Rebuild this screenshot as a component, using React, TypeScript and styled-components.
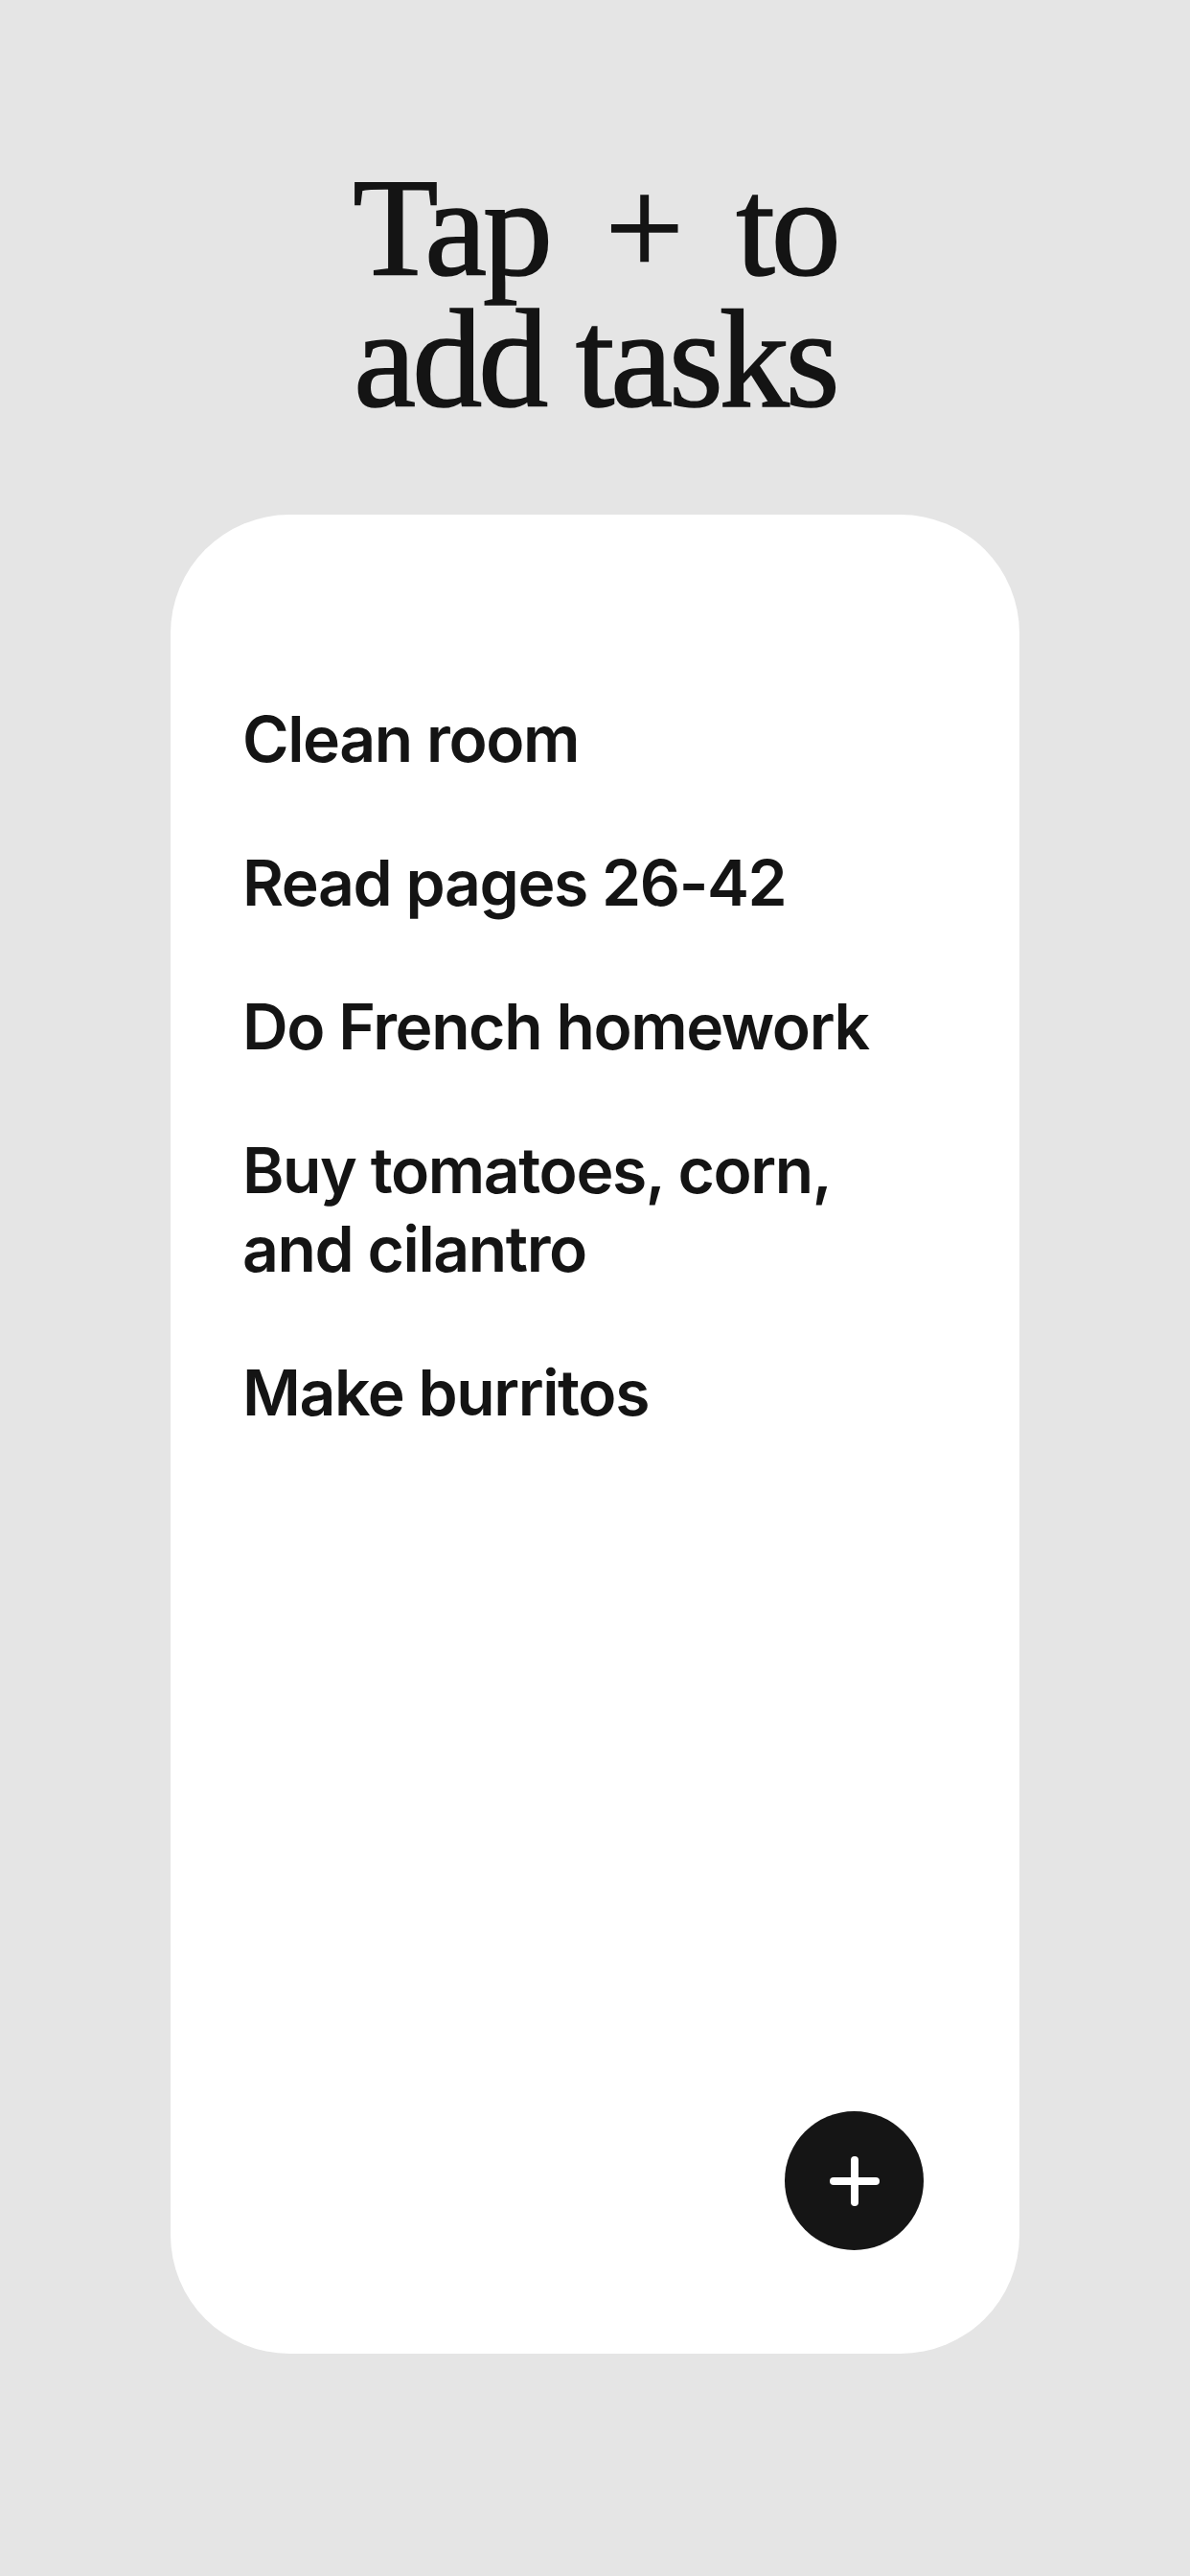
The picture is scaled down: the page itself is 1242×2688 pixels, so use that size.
import React from 'react';
import styled, { createGlobalStyle } from 'styled-components';

const tasks = [
  'Clean room',
  'Read pages 26-42',
  'Do French homework',
  'Buy tomatoes, corn, and cilantro',
  'Make burritos',
];

function App() {
  return (
    <>
      <GlobalStyle />
      <Screen>
        <Title>
          <TitleLine $spread>Tap + to</TitleLine>
          <TitleLine>add tasks</TitleLine>
        </Title>
        <Card>
          <TaskList>
            {tasks.map((task) => (
              <TaskItem key={task}>{task}</TaskItem>
            ))}
          </TaskList>
          <AddButton aria-label="Add task">
            <svg width="52" height="52" viewBox="0 0 52 52">
              <line x1="26" y1="4" x2="26" y2="48" stroke="#fff" strokeWidth="8" strokeLinecap="round" />
              <line x1="4" y1="26" x2="48" y2="26" stroke="#fff" strokeWidth="8" strokeLinecap="round" />
            </svg>
          </AddButton>
        </Card>
      </Screen>
    </>
  );
}

export default App;

const GlobalStyle = createGlobalStyle`
  html, body {
    margin: 0;
    padding: 0;
    background: #e5e5e5;
  }
`;

const Screen = styled.div`
  width: 1242px;
  height: 2688px;
  background: #e5e5e5;
  display: flex;
  flex-direction: column;
  align-items: center;
  padding-top: 170px;
  box-sizing: border-box;
`;

const Title = styled.h1`
  margin: 0;
  font-family: 'Liberation Serif', 'Times New Roman', serif;
  font-weight: 400;
  font-size: 146px;
  line-height: 137px;
  letter-spacing: -4px;
  color: #141414;
  -webkit-text-stroke: 1.6px #141414;
  text-align: center;
`;

const TitleLine = styled.span<{ $spread?: boolean }>`
  display: block;
  word-spacing: ${({ $spread }) => ($spread ? '26px' : '0')};
`;

const Card = styled.div`
  margin-top: 93px;
  width: 886px;
  height: 1919px;
  background: #ffffff;
  border-radius: 124px;
  box-sizing: border-box;
  padding: 193px 75px 108px;
  display: flex;
  flex-direction: column;
`;

const TaskList = styled.ul`
  list-style: none;
  margin: 0;
  padding: 0;
  max-width: 690px;
  display: flex;
  flex-direction: column;
  gap: 68px;
`;

const TaskItem = styled.li`
  font-family: Inter, 'Noto Sans', sans-serif;
  font-weight: 600;
  font-size: 66px;
  line-height: 82px;
  letter-spacing: -1.4px;
  color: #141414;
`;

const AddButton = styled.button`
  margin-top: auto;
  margin-right: 25px;
  align-self: flex-end;
  width: 145px;
  height: 145px;
  border-radius: 50%;
  border: none;
  background: #151515;
  display: flex;
  align-items: center;
  justify-content: center;
  padding: 0;
`;
